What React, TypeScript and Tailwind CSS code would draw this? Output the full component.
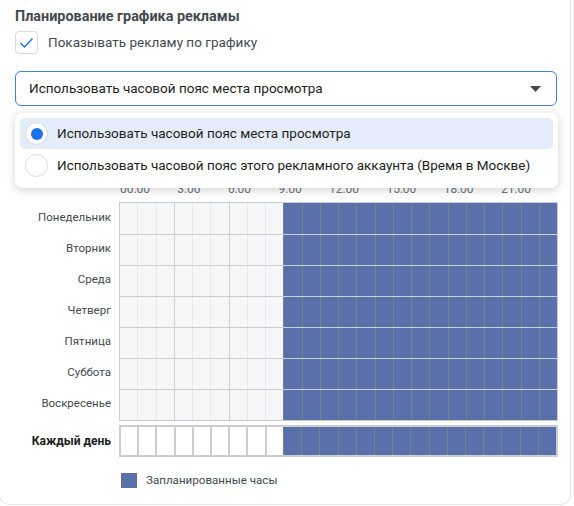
import React from "react";

const days = [
  "Понедельник",
  "Вторник",
  "Среда",
  "Четверг",
  "Пятница",
  "Суббота",
  "Воскресенье",
];

const times = ["00:00", "3:00", "6:00", "9:00", "12:00", "15:00", "18:00", "21:00"];

const hours = Array.from({ length: 24 }, (_, i) => i);

type CellRowProps = { everyDay?: boolean };

function CellRow({ everyDay }: CellRowProps) {
  return (
    <div className="grid grid-cols-[repeat(24,1fr)] h-full">
      {hours.map((h) => {
        const on = h >= 9;
        let cls = "";
        if (on) {
          cls = "bg-[#5a70aa] border-l border-[#71838f]";
        } else if (everyDay) {
          cls = "bg-white border-l-2 border-[#cbcdd1]";
        } else {
          cls =
            h % 3 === 0
              ? "bg-[#f5f6f7] border-l border-[#cbcdd1]"
              : "bg-[#f5f6f7] border-l border-[#e6e8eb]";
        }
        return <div key={h} className={cls} />;
      })}
    </div>
  );
}

function Radio({ checked }: { checked: boolean }) {
  return (
    <span className="w-[23px] h-[23px] rounded-full bg-white border border-[#d8dadf] flex items-center justify-center shrink-0">
      {checked && <span className="w-[12px] h-[12px] rounded-full bg-[#1a73e8]" />}
    </span>
  );
}

export default function App() {
  return (
    <div
      className="w-[574px] h-[506px] bg-white relative overflow-hidden text-[#1c1e21]"
      style={{ fontFamily: "Roboto, 'Liberation Sans', Arial, sans-serif" }}
    >
      <div className="-ml-px w-[572px] h-[505px] border border-t-0 border-[#e4e6e9] rounded-b-[10px]">
        <div className="pl-[15px] pt-[8px]">
          <div className="text-[14.4px] leading-[18px] font-bold text-[#444950]">
            Планирование графика рекламы
          </div>
          <div className="flex items-center mt-[5px] h-[23px]">
            <span className="w-[23px] h-[23px] rounded-[4px] border border-[#d8dadf] bg-white flex items-center justify-center">
              <svg width="15" height="12" viewBox="0 0 15 12">
                <path d="M1.5 6 L5.5 10 L13.5 1.5" fill="none" stroke="#1877f2" strokeWidth="1.4" />
              </svg>
            </span>
            <span className="ml-[10px] text-[13.5px] text-[#444950]">Показывать рекламу по графику</span>
          </div>
          <div className="mt-[17px] w-[542px] h-[35px] rounded-[6px] border border-[#3b82e8] flex items-center pl-[13px] pr-[15px]">
            <span className="flex-1 text-[13.5px] text-[#1c1e21]">
              Использовать часовой пояс места просмотра
            </span>
            <svg width="11" height="6" viewBox="0 0 11 6">
              <path d="M0 0 H11 L5.5 6 Z" fill="#444950" />
            </svg>
          </div>
        </div>

        <div className="mt-[76px] flex">
          <div className="w-[119px] shrink-0" />
          <div className="w-[411px] ml-px flex justify-between text-[12px] leading-[14px] text-[#6f747c]">
            {times.map((t) => (
              <span key={t}>{t}</span>
            ))}
          </div>
        </div>

        <div className="mt-[6px] flex">
          <div className="w-[119px] shrink-0 pr-[8px] flex flex-col items-end text-[11.5px] text-[#444950]">
            {days.map((d) => (
              <div key={d} className="h-[31px] flex items-center">
                {d}
              </div>
            ))}
          </div>
          <div className="w-[439px] border-t border-b border-r border-[#cbcdd1]">
            {days.map((d, i) => (
              <div key={d} className={`h-[31px] ${i > 0 ? "border-t border-[#cbcdd1]" : ""}`}>
                <CellRow />
              </div>
            ))}
          </div>
        </div>

        <div className="mt-[4px] flex">
          <div className="w-[119px] shrink-0 pr-[8px] flex items-center justify-end text-[12px] font-bold text-[#1c1e21] h-[32px]">
            Каждый день
          </div>
          <div className="w-[439px] h-[32px] border-2 border-l-0 border-[#cbcdd1]">
            <CellRow everyDay />
          </div>
        </div>

        <div className="mt-[15px] ml-[121px] flex items-center">
          <span className="w-[16px] h-[15px] bg-[#5a70aa]" />
          <span className="ml-[9px] text-[11.6px] text-[#444950]">Запланированные часы</span>
        </div>
      </div>

      <div className="absolute left-[15px] top-[113px] w-[543px] h-[75px] bg-white rounded-[7px] shadow-[0_2px_10px_rgba(0,0,0,0.18)] p-[5px]">
        <div className="h-[31px] rounded-[5px] bg-[#e4ecfa] flex items-center pl-[5px]">
          <Radio checked />
          <span className="ml-[9px] text-[13.5px] text-[#1c1e21]">
            Использовать часовой пояс места просмотра
          </span>
        </div>
        <div className="h-[31px] flex items-center pl-[5px] mt-[1px]">
          <Radio checked={false} />
          <span className="ml-[9px] text-[13.5px] text-[#1c1e21]">
            Использовать часовой пояс этого рекламного аккаунта (Время в Москве)
          </span>
        </div>
      </div>
    </div>
  );
}
